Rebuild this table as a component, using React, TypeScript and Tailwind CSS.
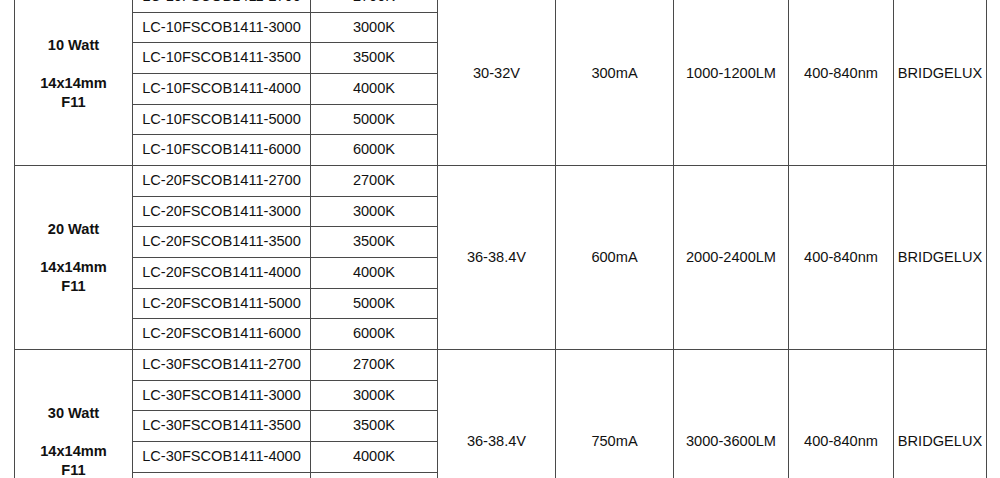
const groups = [
  {
    watt: "10 Watt",
    code: "10",
    voltage: "30-32V",
    current: "300mA",
    lumen: "1000-1200LM",
  },
  {
    watt: "20 Watt",
    code: "20",
    voltage: "36-38.4V",
    current: "600mA",
    lumen: "2000-2400LM",
  },
  {
    watt: "30 Watt",
    code: "30",
    voltage: "36-38.4V",
    current: "750mA",
    lumen: "3000-3600LM",
  },
];

const temps = ["2700", "3000", "3500", "4000", "5000", "6000"];

const cell = "flex items-center justify-center bg-white text-center";

function Group({ group }: { group: (typeof groups)[number] }) {
  const shared = [group.voltage, group.current, group.lumen, "400-840nm", "BRIDGELUX"];

  return (
    <>
      <div className={`${cell} row-span-6 flex-col font-bold leading-[19px]`}>
        <span>{group.watt}</span>
        <span>&nbsp;</span>
        <span>14x14mm</span>
        <span>F11</span>
      </div>
      <div className={cell}>LC-{group.code}FSCOB1411-{temps[0]}</div>
      <div className={cell}>{temps[0]}K</div>
      {shared.map((value) => (
        <div key={value} className={`${cell} row-span-6`}>
          {value}
        </div>
      ))}
      {temps.slice(1).map((t) => (
        <Row key={t} code={group.code} temp={t} />
      ))}
    </>
  );
}

function Row({ code, temp }: { code: string; temp: string }) {
  return (
    <>
      <div className={cell}>
        LC-{code}FSCOB1411-{temp}
      </div>
      <div className={cell}>{temp}K</div>
    </>
  );
}

export default function App() {
  return (
    <div className="h-[478px] overflow-hidden bg-white font-['Liberation_Sans',Arial,sans-serif] text-[14.6px] text-[#111]">
      <div className="-mt-[19px] ml-[14px] grid w-[973px] grid-cols-[117px_177px_126px_117px_117px_114px_104px_92px] auto-rows-[30px_29px_30px_30px_29px_30px] gap-px border border-[#4a4a4a] bg-[#4a4a4a]">
        {groups.map((group) => (
          <Group key={group.watt} group={group} />
        ))}
      </div>
    </div>
  );
}
